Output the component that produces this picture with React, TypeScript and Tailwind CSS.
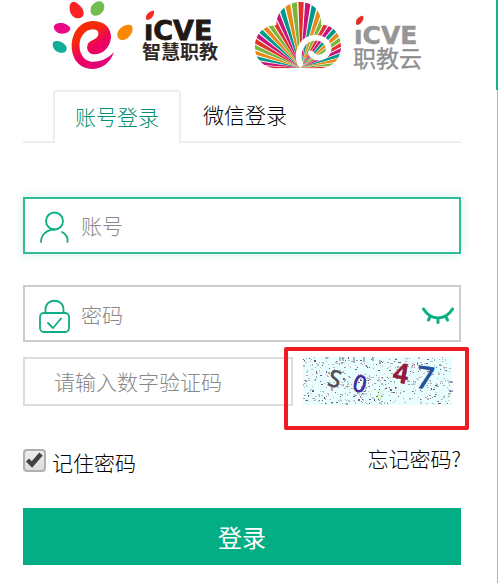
import { useState } from "react";

const RAY_COLORS = ["#7ab63c", "#e0312d", "#c8137c", "#00998a", "#e8891a"];

const wordmark = "font-['DejaVu_Sans',sans-serif]";
const hanText = "font-['Noto_Sans_CJK_SC',sans-serif]";

function ZhihuiLogo() {
  return (
    <svg className="h-20 w-[190px] shrink-0" viewBox="0 0 190 80" role="img" aria-label="ICVE 智慧职教">
      <defs>
        <linearGradient id="petal" x1="0.1" y1="0" x2="0.7" y2="1">
          <stop offset="0.3" stopColor="#f62b08" />
          <stop offset="0.6" stopColor="#ed0060" />
          <stop offset="1" stopColor="#e0047c" />
        </linearGradient>
      </defs>
      <g transform="scale(0.33333)">
        <path d="M90 14C97 -4 113 8 124 22C137 40 130 54 114 55C98 56 84 34 90 14Z" fill="#fb2226" />
        <path d="M156 16C168 0 190 -2 193 18C194 36 178 49 163 47C150 44 149 28 156 16Z" fill="#73bd50" />
        <path d="M44 75C57 63 84 70 91 84C91 99 68 105 53 98C42 91 39 80 44 75Z" fill="#ee0785" />
        <path d="M40 126C51 118 75 127 80 143C82 160 61 162 48 153C38 145 36 133 40 126Z" fill="#15ab9b" />
        <path d="M233 97C239 80 267 67 276 79C284 95 266 118 249 121C235 121 229 108 233 97Z" fill="#fb8805" />
        <path
          d="M222 157C210 190 186 207 156 207C117 205 95 176 95 138C96 94 122 63 162 63C193 64 214 84 213 113C210 143 188 162 165 163C148 163 139 151 142 137C146 121 162 122 171 112C180 101 175 88 158 88C137 89 122 107 119 128C116 156 128 180 153 185C179 188 202 177 222 157Z"
          fill="url(#petal)"
        />
      </g>
      <text x="104" y="40" fontSize="27" fontWeight="700" fill="#211815" stroke="#211815" strokeWidth="0.8" className={wordmark}>iCVE</text>
      <rect x="103" y="15" width="11" height="9" fill="#fff" />
      <path d="M106 19C105 14 111 10 114 11C115 15 111 20 107 20Z" fill="#f52b24" />
      <text x="102" y="59" fontSize="19" fontWeight="700" fill="#302825" className={hanText}>智慧职教</text>
    </svg>
  );
}

function CloudLogo() {
  const ray = (deg: number) => `${182 + 240 * Math.cos((deg * Math.PI) / 180)} ${203 - 240 * Math.sin((deg * Math.PI) / 180)}`;
  const rays = Array.from({ length: 33 }, (_, i) => {
    const start = 188 - i * 6;
    return `M182 203L${ray(start)}L${ray(start - 4.7)}Z`;
  });
  return (
    <svg className="h-20 w-[200px] shrink-0" viewBox="0 0 200 80" role="img" aria-label="ICVE 职教云">
      <defs>
        <clipPath id="cloud">
          <path d="M120 205C75 208 45 180 45 140C45 102 73 75 109 76C108 37 140 6 181 6C220 6 248 37 243 75C277 72 304 102 303 142C302 178 276 205 238 205Z" />
        </clipPath>
      </defs>
      <g transform="scale(0.33333)">
        <g clipPath="url(#cloud)">
          {rays.map((d, i) => (
            <path key={i} d={d} fill={RAY_COLORS[i % 5]} />
          ))}
        </g>
        <path d="M181 192C166 158 187 113 228 113C268 116 277 155 252 169C236 177 219 172 213 160" fill="none" stroke="#fff" strokeWidth="17" strokeLinecap="round" />
      </g>
      <text x="114" y="44" fontSize="25" fontWeight="700" fill="#969696" stroke="#969696" strokeWidth="0.5" className={wordmark}>iCVE</text>
      <rect x="113" y="20" width="11" height="9" fill="#fff" />
      <path d="M116 24C115 19 121 15 123 16C125 20 120 25 117 25Z" fill="#df302b" />
      <text x="113" y="67" fontSize="23" fontWeight="400" fill="#8e8e8e" stroke="#8e8e8e" strokeWidth="0.3" className={hanText}>职教云</text>
    </svg>
  );
}

/** Speckled background, generated from a fixed seed so it stays the same between renders. */
function speckles() {
  let seed = 4711;
  const next = () => {
    seed = (seed + 0x6d2b79f5) | 0;
    let t = Math.imul(seed ^ (seed >>> 15), 1 | seed);
    t = (t + Math.imul(t ^ (t >>> 7), 61 | t)) ^ t;
    return ((t ^ (t >>> 14)) >>> 0) / 4294967296;
  };
  const colors = ["#a8969e", "#b79aa2", "#a0a8a8", "#c4a3b4", "#b0bcc8", "#a8c0b0", "#ffffff", "#c9bdc4", "#c9bdc4", "#8a5064", "#5c5c94"];
  return Array.from({ length: 620 }, () => ({
    x: Math.floor(next() * 148),
    y: Math.floor(next() * 47),
    w: next() > 0.6 ? 2 : 1,
    h: next() > 0.8 ? 2 : 1,
    fill: colors[Math.floor(next() * colors.length)],
  }));
}

const SPECKLES = speckles();

function Captcha() {
  return (
    <svg className="block h-12 w-[149px] overflow-visible" viewBox="0 0 149 48">
      <rect width="149" height="48" fill="#e9ffff" />
      {SPECKLES.map((s, i) => (
        <rect key={i} x={s.x} y={s.y} width={s.w} height={s.h} fill={s.fill} />
      ))}
      <path d="M37 0v4M40 0v4M51 0v6M61 0v5M70 0v4" stroke="#597195" />
      <path d="M146 25h4M146 34h4" stroke="#5b3594" />
      <g className="font-['Open_Sans',sans-serif]" fontWeight="600">
        <text x="25" y="30" fontSize="24" fill="#55505a" transform="rotate(15 31 22)">S</text>
        <text x="50" y="35" fontSize="24" fill="#472c9c" transform="rotate(15 56 26)">0</text>
        <text x="90" y="26" fontSize="28" fontWeight="700" fill="#941943" transform="rotate(10 98 17)">4</text>
        <text x="113" y="32" fontSize="32" fill="#23539a" transform="rotate(8 121 20)">7</text>
      </g>
      <path d="M74 34c5 0 3 4 0 7h5" fill="none" stroke="#d2ffa6" strokeWidth="1.5" />
    </svg>
  );
}

const field = "w-full border-2 bg-white text-[21px] font-light text-black outline-none placeholder:text-[#888]";

export default function App() {
  const [tab, setTab] = useState("account");
  const [remember, setRemember] = useState(true);
  const [visible, setVisible] = useState(false);
  const tabClass = (on: boolean) =>
    on
      ? "-mb-0.5 h-[53px] rounded-t border-2 border-b-0 border-[#eee] bg-white px-5 pb-1 text-[#04916e]"
      : "-mb-0.5 h-[53px] px-5 pb-1.5 text-black";

  return (
    <div className="flex min-h-screen bg-white font-['Noto_Sans_CJK_SC',sans-serif] text-[21px] leading-8 font-light text-black">
      <main className="min-w-0 flex-1 pr-[35px] pb-4 pl-[23px]">
        <header className="flex h-[90px] gap-[10px] pl-[17px]">
          <ZhihuiLogo />
          <CloudLogo />
        </header>

        <div role="tablist" className="flex gap-0.5 border-b-2 border-[#eee] pl-[30px]">
          <button role="tab" aria-selected={tab === "account"} className={tabClass(tab === "account")} onClick={() => setTab("account")}>
            账号登录
          </button>
          <button role="tab" aria-selected={tab === "wechat"} className={tabClass(tab === "wechat")} onClick={() => setTab("wechat")}>
            微信登录
          </button>
        </div>

        <form className="pt-[54px]" onSubmit={(e) => e.preventDefault()}>
          <div className="relative">
            <input aria-label="账号" placeholder="账号" className={`${field} block h-[57px] border-[#2fbd97] pb-0.5 pl-14 shadow-[0_0_10px_rgba(4,174,132,0.2)]`} />
            <svg className="pointer-events-none absolute top-3 left-4 h-9 w-8" viewBox="0 0 32 36" fill="none" stroke="#0ead84" strokeWidth="1.8" strokeLinecap="round">
              <circle cx="15.5" cy="12" r="8.5" />
              <path d="M2 33C2 26 7 21 15 20.5M23 23C27 25 29 29 28.5 33" />
            </svg>
          </div>

          <div className="relative mt-[31px]">
            <input type={visible ? "text" : "password"} aria-label="密码" placeholder="密码" className={`${field} block h-[57px] border-[#ccc] pr-12 pl-14`} />
            <svg className="pointer-events-none absolute top-3 left-4 h-9 w-8" viewBox="0 0 32 36" fill="none" stroke="#0ead84" strokeWidth="1.8" strokeLinecap="round" strokeLinejoin="round">
              <path d="M6.5 16V12C7 1 24 1 24.5 12V16" />
              <rect x="1" y="16" width="29" height="19" rx="4" />
              <path d="M9 26L14 31L22 21.5" />
            </svg>
            <button type="button" aria-label="显示密码" className="absolute top-5 right-[7px]" onClick={() => setVisible(!visible)}>
              <svg className="block h-5 w-8" viewBox="0 0 32 20" fill="none" stroke="#0ab083" strokeWidth="3" strokeLinecap="round">
                <path d="M1.5 4C9 16 23 16 30.5 4M8 12L6.5 15M16 13V17.5M24 12L25.5 15" />
              </svg>
            </button>
          </div>

          <div className="relative mt-[15px] flex items-start gap-[10px]">
            <input aria-label="请输入数字验证码" placeholder="请输入数字验证码" className={`${field} h-[49px] min-w-0 flex-1 border-[#ddd] pb-0.5 pl-[29px]`} />
            <button type="button" aria-label="换一张验证码" className="mr-[9px] shrink-0">
              <Captcha />
            </button>
            <div className="pointer-events-none absolute -top-2.5 -right-2 h-[83px] w-[185px] rounded-xs border-4 border-[#ee1c25]" />
          </div>

          <div className="mt-9 flex items-start justify-between">
            <label className="flex items-center gap-1.5 pt-1">
              <span className="relative -mt-1 block size-[23px]">
                <input type="checkbox" checked={remember} onChange={() => setRemember(!remember)} className="block size-[23px] appearance-none rounded border-2 border-[#b0b0b0] bg-linear-to-b from-[#eee] to-[#dcdcdc]" />
                {remember && (
                  <svg className="pointer-events-none absolute inset-0" viewBox="0 0 23 23" fill="none" stroke="#424242" strokeWidth="4.5">
                    <path d="M4.5 11L9 15.5L18 5" />
                  </svg>
                )}
              </span>
              记住密码
            </label>
            <a href="#forgot">忘记密码?</a>
          </div>

          <button type="submit" className="mt-[30px] block h-[57px] w-full bg-[#04ae84] text-2xl font-normal text-white">
            登录
          </button>
        </form>
      </main>
      <aside className="flex w-0.5 shrink-0 flex-col items-end">
        <div className="h-[90px] w-full bg-[#16b18b]" />
        <div className="w-px flex-1 bg-[#b3b3b3]" />
      </aside>
    </div>
  );
}
